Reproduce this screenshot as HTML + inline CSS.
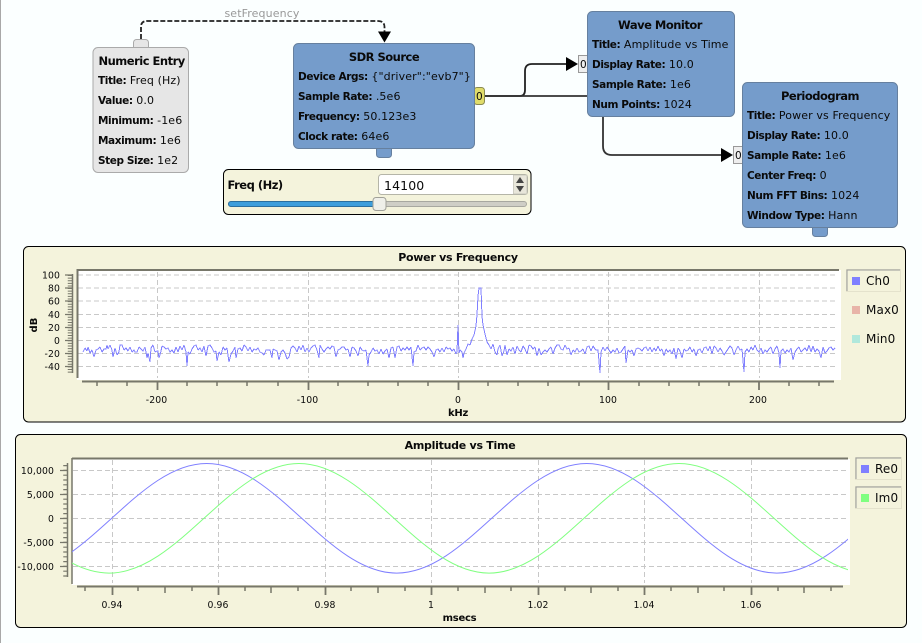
<!DOCTYPE html>
<html><head><meta charset="utf-8"><style>
html,body{margin:0;padding:0;background:#fbffff;width:922px;height:643px;overflow:hidden}
svg{display:block;position:absolute;left:0;top:0}
text{font-family:"DejaVu Sans","Liberation Sans",sans-serif;font-size:11px;fill:#0a0a0a;letter-spacing:.12px}
.b{font-weight:bold;font-size:10.500px;letter-spacing:-.4px}
.t{font-weight:bold;font-size:11.500px;letter-spacing:-.5px}
.p{font-weight:bold;font-size:11px;text-anchor:middle;letter-spacing:-.27px}
.a{font-size:9.300px;text-anchor:middle;letter-spacing:.1px}
.r{font-size:9.300px;text-anchor:end;letter-spacing:.1px}
.l{font-size:12px}
.g{stroke:#c8c8c8;stroke-width:1;stroke-dasharray:5 3;fill:none}
.k{stroke:#77776a;fill:none}
</style></head><body>
<svg width="922" height="643" viewBox="0 0 922 643" xmlns="http://www.w3.org/2000/svg">
<defs><clipPath id="c2"><rect x="72" y="459" width="776" height="126"/></clipPath></defs>
<rect x="0" y="0" width="1" height="643" fill="#a8a8a8"/>

<!-- message connection -->
<path d="M141 39V27Q141 21 147 21H378Q384.500 21 384.500 27V33" fill="none" stroke="#222" stroke-width="1.800" stroke-dasharray="5 2"/>
<path d="M378 31.500H391L384.500 42.500Z" fill="#000"/>
<text x="262" y="17" text-anchor="middle" style="fill:#999">setFrequency</text>

<!-- connections -->
<path d="M484 96H520Q525 96 525 90V71Q525 64 532 64H567" fill="none" stroke="#222" stroke-width="1.800"/>
<path d="M484 96H588" fill="none" stroke="#333" stroke-width="1.800"/>
<path d="M603 116V146Q603 155 612 155H722" fill="none" stroke="#333" stroke-width="1.800"/>
<path d="M566 57L578 64L566 71Z" fill="#000"/>
<path d="M721 148L733 155L721 162Z" fill="#000"/>

<!-- Numeric Entry -->
<rect x="133.500" y="39.500" width="15" height="12" rx="3" fill="#e6e6e6" stroke="#aaa"/>
<rect x="93" y="47.500" width="95.500" height="125" rx="5" fill="#e6e6e6" stroke="#aaa" stroke-width="1"/>
<text class="t" x="98.500" y="65">Numeric Entry</text>
<text x="98" y="84"><tspan class="b">Title:</tspan> Freq (Hz)</text>
<text x="98" y="104"><tspan class="b">Value:</tspan> 0.0</text>
<text x="98" y="124"><tspan class="b">Minimum:</tspan> -1e6</text>
<text x="98" y="144"><tspan class="b">Maximum:</tspan> 1e6</text>
<text x="98" y="164"><tspan class="b">Step Size:</tspan> 1e2</text>

<!-- SDR Source -->
<rect x="376.500" y="143" width="15" height="14.500" rx="3" fill="#759ccb" stroke="#66809f"/>
<rect x="474" y="87.500" width="10.500" height="17" rx="3" fill="#e0dc6a" stroke="#8a8a50"/>
<rect x="293.500" y="43.500" width="181" height="105" rx="5" fill="#759ccb" stroke="#66809f"/>
<text class="t" x="384" y="61" text-anchor="middle">SDR Source</text>
<text x="298" y="80"><tspan class="b">Device Args:</tspan> {"driver":"evb7"}</text>
<text x="298" y="100"><tspan class="b">Sample Rate:</tspan> .5e6</text>
<text x="298" y="120"><tspan class="b">Frequency:</tspan> 50.123e3</text>
<text x="298" y="140"><tspan class="b">Clock rate:</tspan> 64e6</text>
<text x="476" y="100" style="font-size:10.500px">0</text>

<!-- Wave Monitor -->
<rect x="578.500" y="55.500" width="10" height="17" fill="#eee" stroke="#999"/>
<text x="580" y="68" style="font-size:10.500px">0</text>
<rect x="587.500" y="11.500" width="147" height="105" rx="5" fill="#759ccb" stroke="#66809f"/>
<text class="t" x="660" y="29" text-anchor="middle">Wave Monitor</text>
<text x="592" y="48"><tspan class="b">Title:</tspan> Amplitude vs Time</text>
<text x="592" y="68"><tspan class="b">Display Rate:</tspan> 10.0</text>
<text x="592" y="88"><tspan class="b">Sample Rate:</tspan> 1e6</text>
<text x="592" y="108"><tspan class="b">Num Points:</tspan> 1024</text>

<!-- Periodogram -->
<rect x="733.500" y="146.500" width="10" height="17" fill="#eee" stroke="#999"/>
<text x="735" y="159" style="font-size:10.500px">0</text>
<rect x="812.500" y="222" width="15" height="14.500" rx="3" fill="#759ccb" stroke="#66809f"/>
<rect x="742.500" y="82.500" width="155" height="145" rx="5" fill="#759ccb" stroke="#66809f"/>
<text class="t" x="820" y="100" text-anchor="middle">Periodogram</text>
<text x="747" y="119"><tspan class="b">Title:</tspan> Power vs Frequency</text>
<text x="747" y="139"><tspan class="b">Display Rate:</tspan> 10.0</text>
<text x="747" y="159"><tspan class="b">Sample Rate:</tspan> 1e6</text>
<text x="747" y="179"><tspan class="b">Center Freq:</tspan> 0</text>
<text x="747" y="199"><tspan class="b">Num FFT Bins:</tspan> 1024</text>
<text x="747" y="219"><tspan class="b">Window Type:</tspan> Hann</text>

<!-- Freq widget -->
<rect x="223.500" y="169.500" width="307.500" height="45" rx="5" fill="#f4f3dc" stroke="#000"/>
<text class="t" x="227.500" y="189">Freq (Hz)</text>
<rect x="378.500" y="174.500" width="149" height="20" rx="3" fill="#fff" stroke="#b5b5a8"/>
<rect x="513.500" y="175" width="13.500" height="19" fill="#e8e6da" stroke="#b5b5a8" stroke-width="0.600"/>
<path d="M520 177L524 183H516Z" fill="#444"/>
<path d="M516 186H524L520 192Z" fill="#444"/>
<text x="384" y="190" style="font-size:12.500px">14100</text>
<rect x="228.500" y="201.500" width="298" height="5" rx="2.500" fill="#cfcec6" stroke="#a8a8a0"/>
<rect x="228.500" y="201.500" width="146" height="5" rx="2.500" fill="#3d9edc" stroke="#2b6f9f"/>
<rect x="373" y="197.500" width="13" height="13" rx="3" fill="#efefe9" stroke="#a0a098"/>

<!-- Plot 1 panel -->
<rect x="23.500" y="246.500" width="882" height="175.500" rx="5" fill="#f4f3dc" stroke="#000"/>
<text class="p" x="458" y="261">Power vs Frequency</text>
<rect x="77" y="270" width="764" height="110" fill="#fff"/>
<path class="g" d="M78 275H838M78 288H838M78 301H838M78 314.500H838M78 327.500H838M78 340.500H838M78 353.500H838M78 366.500H838"/>
<path class="g" d="M157.500 272V378M308.500 272V378M458.500 272V378M608.500 272V378M759.500 272V378"/>
<path d="M77.500 269V378" stroke="#77776a" stroke-width="2" fill="none"/>
<path d="M77 270H839" stroke="#77776a" stroke-width="2" fill="none"/>
<!-- plot1 y axis -->
<path class="k" stroke-width="1.500" d="M72.500 274V373"/>
<path class="k" stroke-width="1.300" d="M65 275H73M65 288H73M65 301H73M65 314.500H73M65 327.500H73M65 340.500H73M65 353.500H73M65 366.500H73"/>
<path d="M70 275V373" stroke="#77776a" stroke-width="4.500" stroke-dasharray="1 1.610" fill="none"/>
<text class="r" x="60" y="278.500">100</text><text class="r" x="60" y="291.500">80</text><text class="r" x="60" y="304.500">60</text><text class="r" x="60" y="318">40</text><text class="r" x="60" y="331">20</text><text class="r" x="60" y="344">0</text><text class="r" x="60" y="357">-20</text><text class="r" x="60" y="370">-40</text>
<text transform="translate(37 325) rotate(-90)" text-anchor="middle" style="font-size:10px;font-weight:bold">dB</text>
<!-- plot1 x axis -->
<path class="k" stroke-width="2" d="M82 381.500H834"/>
<path class="k" stroke-width="1.500" d="M97 382V386M127 382V386M187 382V386M217 382V386M247 382V386M278 382V386M338 382V386M368 382V386M398 382V386M428 382V386M488 382V386M518 382V386M548 382V386M579 382V386M639 382V386M669 382V386M699 382V386M729 382V386M789 382V386M819 382V386"/>
<path class="k" stroke-width="1.800" d="M157.500 382V390M308.500 382V390M458.500 382V390M608.500 382V390M759 382V390"/>
<text class="a" x="156.500" y="403">-200</text><text class="a" x="307.500" y="403">-100</text><text class="a" x="458" y="403">0</text><text class="a" x="608" y="403">100</text><text class="a" x="758" y="403">200</text>
<text class="p" x="458" y="416" style="font-size:10px">kHz</text>
<!-- spectrum -->
<path fill="none" stroke="#8080ff" stroke-width="1" stroke-linejoin="bevel" shape-rendering="crispEdges" d="M83 352 85 348 87 351 88 347 90 353 92 350 94 357 96 350 98 349 100 347 102 352 104 349 106 349 107 345 108 349 110 345 112 350 113 357 115 348 117 355 119 352 120 345 122 345 124 350 126 348 128 351 130 347 132 352 134 350 135 352 137 352 139 347 141 349 143 351 145 347 147 358 148 353 150 362 151 348 153 345 155 352 157 351 158 351 159 358 161 351 162 346 164 347 166 349 168 348 170 352 172 350 174 353 176 347 178 352 180 346 182 350 184 345 186 352 187 366 188 352 190 354 192 349 194 346 196 345 198 350 200 348 202 352 204 346 206 356 208 346 210 345 212 348 214 352 216 351 217 361 219 352 221 355 223 347 225 350 227 348 229 362 231 354 233 351 235 347 236 358 238 349 240 348 242 351 244 345 246 347 248 351 250 347 252 352 254 349 256 350 258 348 260 352 262 353 264 355 266 350 268 350 270 350 272 358 273 349 275 350 277 351 279 360 281 352 283 350 285 353 287 359 289 357 291 348 293 346 295 348 297 352 299 346 301 350 303 345 305 352 307 348 309 352 311 348 313 346 315 345 317 350 319 358 320 345 322 349 324 352 326 349 328 347 330 349 332 346 334 347 336 357 338 350 340 349 342 347 344 347 346 350 348 349 350 357 352 347 354 348 356 351 358 356 360 347 362 350 364 351 366 350 368 366 369 355 371 352 373 348 375 351 377 350 379 354 381 349 383 354 385 351 387 349 389 358 391 348 393 347 395 358 397 347 399 346 401 351 403 348 405 350 407 347 409 350 411 347 413 366 414 352 416 351 418 345 420 350 422 348 424 347 426 350 428 347 430 349 432 352 434 357 436 350 438 349 440 352 442 348 444 352 446 347 448 349 450 348 452 351 454 349 456 354 457 352 458 325 459 353 460 350 461 351 462 352 463 358 464 353 466 349 468 344 470 345 472 339 474 335 476 326 477 315 478 296 479 288 481 288 482 316 483 325 485 334 487 342 489 345 491 349 493 344 495 352 497 355 498 349 500 345 502 356 504 351 505 345 507 355 509 349 511 351 513 347 515 354 517 346 519 350 521 352 523 346 525 349 527 354 529 345 531 346 533 349 535 347 537 356 539 348 541 355 543 352 545 350 547 352 549 349 551 347 553 354 555 348 557 345 559 345 561 349 563 350 565 345 567 349 569 348 571 355 573 350 575 352 577 348 579 352 581 351 583 349 585 354 587 347 589 346 591 351 593 346 595 349 596 350 598 350 600 373 601 352 603 347 605 351 607 347 609 350 611 353 613 350 615 352 617 348 619 353 621 352 623 349 625 346 626 363 628 350 630 352 632 350 634 356 636 349 638 348 640 349 642 351 644 348 646 347 648 351 650 347 652 352 654 348 656 351 658 346 660 351 662 349 664 356 666 349 668 352 670 350 672 354 674 348 676 359 678 348 680 351 682 358 684 349 686 351 688 350 690 347 692 352 694 349 696 356 698 350 700 349 702 353 704 348 706 347 708 351 710 346 712 354 714 346 716 348 718 352 720 348 722 351 724 355 726 352 728 349 730 346 732 348 734 355 736 350 738 346 740 350 742 349 744 372 745 352 747 349 749 352 751 347 753 350 755 345 757 350 759 352 761 348 763 354 765 350 767 352 769 349 771 347 773 354 775 349 777 346 779 353 780 368 781 351 783 349 785 353 787 350 789 352 791 348 793 360 795 352 797 349 799 347 801 352 803 350 805 348 807 351 809 345 811 352 813 346 815 352 817 349 819 351 821 358 823 347 825 353 827 351 829 348 831 347 833 350 835 348"/>
<!-- plot1 legend -->
<rect x="846.500" y="269.500" width="54" height="22" fill="#f4f3dc" stroke="#e4e2cc"/>
<path d="M847 291V270H900" stroke="#999" fill="none"/>
<rect x="852" y="277" width="8" height="8" fill="#8080ff"/>
<text class="l" x="866" y="285">Ch0</text>
<rect x="852" y="306" width="8" height="8" fill="#e8b4a8"/>
<text class="l" x="866" y="314">Max0</text>
<rect x="852" y="335" width="8" height="8" fill="#b0e8dc"/>
<text class="l" x="866" y="343">Min0</text>

<!-- Plot 2 panel -->
<rect x="15.500" y="434.500" width="891" height="193" rx="5" fill="#f4f3dc" stroke="#000"/>
<text class="p" x="460" y="449">Amplitude vs Time</text>
<rect x="72" y="459" width="778" height="126" fill="#fff"/>
<path class="g" d="M73 470.500H846M73 494.500H846M73 518.500H846M73 542.500H846M73 566.500H846"/>
<path class="g" d="M112.500 460V583M218.500 460V583M325.500 460V583M431.500 460V583M538.500 460V583M644.500 460V583M751.500 460V583"/>
<path d="M72 458V584" stroke="#77776a" stroke-width="1.500" fill="none"/>
<path d="M72 458.500H848" stroke="#77776a" stroke-width="2" fill="none"/>
<!-- plot2 y axis -->
<path class="k" stroke-width="1.500" d="M67.500 463V577"/>
<path class="k" stroke-width="1.300" d="M60 470.500H68M60 494.500H68M60 518.500H68M60 542.500H68M60 566.500H68"/>
<path d="M65.500 465V577" stroke="#77776a" stroke-width="4.500" stroke-dasharray="1.200 3.600" fill="none"/>
<text class="r" x="54" y="474">10,000</text><text class="r" x="54" y="498">5,000</text><text class="r" x="54" y="522">0</text><text class="r" x="54" y="546">-5,000</text><text class="r" x="54" y="570">-10,000</text>
<!-- plot2 x axis -->
<path class="k" stroke-width="2" d="M77 586.500H843"/>
<path class="k" stroke-width="1.500" d="M85 587V591M138 587V591M192 587V591M245 587V591M298 587V591M351 587V591M405 587V591M458 587V591M511 587V591M565 587V591M618 587V591M671 587V591M724 587V591M778 587V591M831 587V591"/>
<path class="k" stroke-width="1.500" d="M165 587V593M271 587V593M378 587V593M485 587V593M591 587V593M698 587V593M804 587V593"/>
<path class="k" stroke-width="1.800" d="M112.500 587V595M218.500 587V595M325.500 587V595M431.500 587V595M538.500 587V595M644.500 587V595M751.500 587V595"/>
<text class="a" x="112" y="608">0.94</text><text class="a" x="218" y="608">0.96</text><text class="a" x="325" y="608">0.98</text><text class="a" x="431" y="608">1</text><text class="a" x="538" y="608">1.02</text><text class="a" x="644" y="608">1.04</text><text class="a" x="751" y="608">1.06</text>
<text class="p" x="459.500" y="621" style="font-size:10px">msecs</text>
<!-- sines -->
<g clip-path="url(#c2)">
<path fill="none" stroke="#8080ff" stroke-width="1" d="M16.700 573.100C85.900 573.100 137.500 463.500 206.700 463.500C275.900 463.500 327.500 573.100 396.700 573.100C465.900 573.100 517.500 463.500 586.700 463.500C655.900 463.500 707.500 573.100 776.700 573.100C845.900 573.100 897.500 463.500 966.700 463.500"/>
<path fill="none" stroke="#80ff80" stroke-width="1" d="M-81 463.500C-11.800 463.500 39.800 573.100 109 573.100C178.200 573.100 229.800 463.500 299 463.500C368.200 463.500 419.800 573.100 489 573.100C558.200 573.100 609.800 463.500 679 463.500C748.200 463.500 799.800 573.100 869 573.100"/>
</g>
<!-- plot2 legend -->
<rect x="855.500" y="457.500" width="46" height="22" fill="#f4f3dc" stroke="#e4e2cc"/>
<path d="M856 479V458H901" stroke="#999" fill="none"/>
<rect x="861" y="465" width="8" height="8" fill="#8080ff"/>
<text class="l" x="875" y="473">Re0</text>
<rect x="855.500" y="486.500" width="46" height="22" fill="#f4f3dc" stroke="#e4e2cc"/>
<path d="M856 508V487H901" stroke="#999" fill="none"/>
<rect x="861" y="494" width="8" height="8" fill="#80ff80"/>
<text class="l" x="875" y="502">Im0</text>
</svg>
</body></html>
